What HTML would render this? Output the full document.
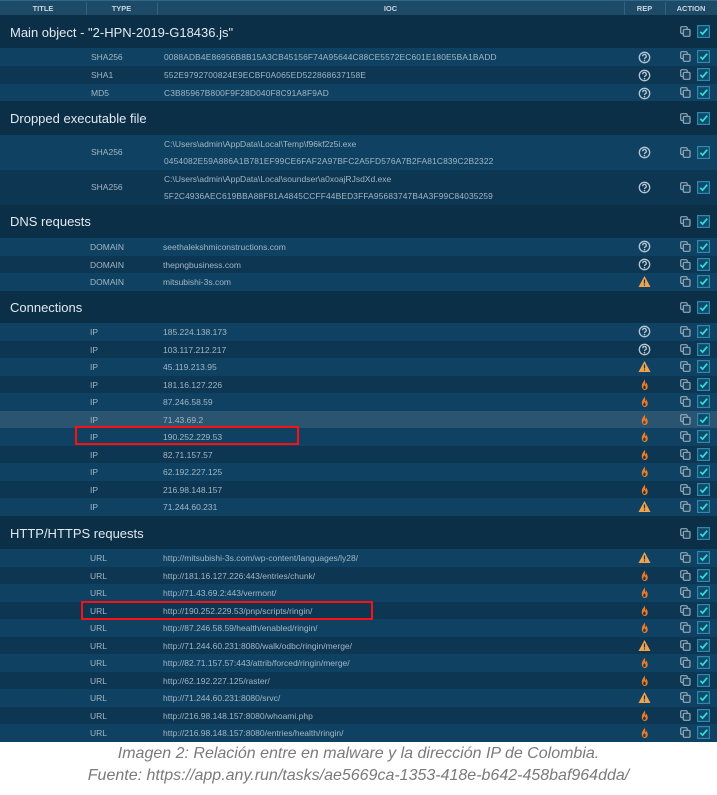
<!DOCTYPE html>
<html><head><meta charset="utf-8"><style>
*{margin:0;padding:0;box-sizing:border-box}
body{width:717px;height:795px;background:#fff;position:relative;overflow:hidden;font-family:"Liberation Sans",sans-serif}
.hd{position:absolute;left:0;top:0;width:717px;height:15px;background:#1c4a67;color:#c9d6df;font-size:7.5px;font-weight:bold;border-top:1px solid #2d6a8a}
.hd span{position:absolute;top:3px;text-align:center}
.hd i{position:absolute;top:1px;width:1px;height:13px;background:#2f6384}
.s{position:absolute;left:0;width:717px;background:#0c2f48;color:#e2e9ee;font-size:13px}
.s b{font-weight:normal;position:absolute;left:10px}
.r{position:absolute;left:0;width:717px;height:17.5px;color:#a4b6c3;font-size:8.5px;background:#0d3652}
.r.a{background:#0f4262}
.r.h{background:#2a5470}
.t{position:absolute;left:91px;top:4px}
.v{position:absolute;left:164px;top:4px;font-size:8.4px;letter-spacing:0.15px}
.r.ip .t{left:90px}.r.ip .v{left:163px;font-size:8.5px;letter-spacing:0}
.rep{position:absolute;left:638px;width:13px;height:13px}
.cp{position:absolute;left:680px;width:11px;height:11px}
.cb{position:absolute;left:697px;width:13px;height:13px}
.box{position:absolute;border:2px solid #ff1010}
.cap{position:absolute;left:0;width:717px;text-align:center;color:#7a7a7a;font-style:italic;font-size:16px;font-family:"Liberation Sans",sans-serif;font-weight:300}
</style></head><body>
<svg width="0" height="0" style="position:absolute">
<defs>
<symbol id="q" viewBox="0 0 13 13"><circle cx="6.5" cy="6.5" r="5.2" fill="none" stroke="#b8c6d0" stroke-width="1.3"/><path d="M4.7 5.2a1.8 1.8 0 1 1 2.6 1.6c-.6.3-.8.6-.8 1.2" fill="none" stroke="#b8c6d0" stroke-width="1.3"/><circle cx="6.5" cy="9.6" r=".8" fill="#b8c6d0"/></symbol>
<symbol id="w" viewBox="0 0 13 13"><path d="M6.5 1L12.5 12H.5z" fill="#f2a24a"/><rect x="5.9" y="4.5" width="1.2" height="4" fill="#0d3652"/><rect x="5.9" y="9.4" width="1.2" height="1.2" fill="#0d3652"/></symbol>
<symbol id="f" viewBox="0 0 13 13"><path d="M6 1C7 3 4 4.5 3.8 7.5 3.6 10.5 5.5 12 6.5 12c2 0 3.3-1.5 3.2-3.8C9.6 6.5 8.7 5.5 8.5 4.5 8 5.8 7.6 6.2 7.2 6.4 7.6 4.5 7 2.5 6 1z M6.5 11c-1 0-1.5-.8-1.3-1.8.2-.8 1-1.3 1.2-2.2.5.8 1.4 1.4 1.3 2.4 0 .9-.5 1.6-1.2 1.6z" fill="#f07a23" fill-rule="evenodd"/></symbol>
<symbol id="c" viewBox="0 0 11 11"><rect x="0.7" y="0.7" width="6.5" height="6.8" rx="1.2" fill="none" stroke="#95aab9" stroke-width="1.2"/><rect x="3.3" y="3.3" width="6.7" height="7" rx="1.2" fill="#1a4560" stroke="#95aab9" stroke-width="1.2"/></symbol>
<symbol id="k" viewBox="0 0 13 13"><rect x="0.6" y="0.6" width="11.8" height="11.8" fill="#0f4a6a" stroke="#2f88b0" stroke-width="1.2"/><path d="M3.3 6.8l2.3 2.3 4.6-5.4" fill="none" stroke="#2fe0d8" stroke-width="1.7"/></symbol>
</defs></svg>

<div class="hd"><span style="left:0;width:86px">TITLE</span><i style="left:86px"></i><span style="left:86px;width:71px">TYPE</span><i style="left:157px"></i><span style="left:157px;width:467px">IOC</span><i style="left:624px"></i><span style="left:624px;width:41px">REP</span><i style="left:665px"></i><span style="left:665px;width:52px">ACTION</span></div>

<div class="s" style="top:15px;height:33px"><b style="top:10px">Main object - "2-HPN-2019-G18436.js"</b><svg class="cp" style="top:11px"><use href="#c"/></svg><svg class="cb" style="top:10px"><use href="#k"/></svg></div>
<div class="r a" style="top:48px;height:18px"><span class="t">SHA256</span><span class="v">0088ADB4E86956B8B15A3CB45156F74A95644C88CE5572EC601E180E5BA1BADD</span><svg class="rep" style="top:3px"><use href="#q"/></svg><svg class="cp" style="top:3px"><use href="#c"/></svg><svg class="cb" style="top:2px"><use href="#k"/></svg></div>
<div class="r" style="top:66px;height:18px"><span class="t">SHA1</span><span class="v">552E9792700824E9ECBF0A065ED522868637158E</span><svg class="rep" style="top:3px"><use href="#q"/></svg><svg class="cp" style="top:3px"><use href="#c"/></svg><svg class="cb" style="top:2px"><use href="#k"/></svg></div>
<div class="r a" style="top:84px;height:17px"><span class="t">MD5</span><span class="v">C3B85967B800F9F28D040F8C91A8F9AD</span><svg class="rep" style="top:3px"><use href="#q"/></svg><svg class="cp" style="top:3px"><use href="#c"/></svg><svg class="cb" style="top:2px"><use href="#k"/></svg></div>

<div class="s" style="top:101px;height:34px"><b style="top:10px">Dropped executable file</b><svg class="cp" style="top:12px"><use href="#c"/></svg><svg class="cb" style="top:11px"><use href="#k"/></svg></div>
<div class="r a" style="top:135px;height:35px"><span class="t" style="top:12px">SHA256</span><span class="v" style="top:4px;font-size:8.5px;letter-spacing:0">C:\Users\admin\AppData\Local\Temp\f96kf2z5i.exe</span><span class="v" style="top:21px">0454082E59A886A1B781EF99CE6FAF2A97BFC2A5FD576A7B2FA81C839C2B2322</span><svg class="rep" style="top:11px"><use href="#q"/></svg><svg class="cp" style="top:12px"><use href="#c"/></svg><svg class="cb" style="top:11px"><use href="#k"/></svg></div>
<div class="r" style="top:170px;height:35px"><span class="t" style="top:12px">SHA256</span><span class="v" style="top:4px;font-size:8.5px;letter-spacing:0">C:\Users\admin\AppData\Local\soundser\a0xoajRJsdXd.exe</span><span class="v" style="top:21px">5F2C4936AEC619BBA88F81A4845CCFF44BED3FFA95683747B4A3F99C84035259</span><svg class="rep" style="top:11px"><use href="#q"/></svg><svg class="cp" style="top:12px"><use href="#c"/></svg><svg class="cb" style="top:11px"><use href="#k"/></svg></div>

<div class="s" style="top:205px;height:33px"><b style="top:9px">DNS requests</b><svg class="cp" style="top:11px"><use href="#c"/></svg><svg class="cb" style="top:10px"><use href="#k"/></svg></div>
<div class="r a ip" style="top:238px"><span class="t">DOMAIN</span><span class="v">seethalekshmiconstructions.com</span><svg class="rep" style="top:2px"><use href="#q"/></svg><svg class="cp" style="top:3px"><use href="#c"/></svg><svg class="cb" style="top:2px"><use href="#k"/></svg></div>
<div class="r ip" style="top:255.5px"><span class="t">DOMAIN</span><span class="v">thepngbusiness.com</span><svg class="rep" style="top:2px"><use href="#q"/></svg><svg class="cp" style="top:3px"><use href="#c"/></svg><svg class="cb" style="top:2px"><use href="#k"/></svg></div>
<div class="r a ip" style="top:273px"><span class="t">DOMAIN</span><span class="v">mitsubishi-3s.com</span><svg class="rep" style="top:2px"><use href="#w"/></svg><svg class="cp" style="top:3px"><use href="#c"/></svg><svg class="cb" style="top:2px"><use href="#k"/></svg></div>

<div class="s" style="top:290.5px;height:33px"><b style="top:9px">Connections</b><svg class="cp" style="top:11px"><use href="#c"/></svg><svg class="cb" style="top:10px"><use href="#k"/></svg></div>
<div class="r a ip" style="top:323px"><span class="t">IP</span><span class="v">185.224.138.173</span><svg class="rep" style="top:2px"><use href="#q"/></svg><svg class="cp" style="top:3px"><use href="#c"/></svg><svg class="cb" style="top:2px"><use href="#k"/></svg></div>
<div class="r ip" style="top:340.5px"><span class="t">IP</span><span class="v">103.117.212.217</span><svg class="rep" style="top:2px"><use href="#q"/></svg><svg class="cp" style="top:3px"><use href="#c"/></svg><svg class="cb" style="top:2px"><use href="#k"/></svg></div>
<div class="r a ip" style="top:358px"><span class="t">IP</span><span class="v">45.119.213.95</span><svg class="rep" style="top:2px"><use href="#w"/></svg><svg class="cp" style="top:3px"><use href="#c"/></svg><svg class="cb" style="top:2px"><use href="#k"/></svg></div>
<div class="r ip" style="top:375.5px"><span class="t">IP</span><span class="v">181.16.127.226</span><svg class="rep" style="top:2px"><use href="#f"/></svg><svg class="cp" style="top:3px"><use href="#c"/></svg><svg class="cb" style="top:2px"><use href="#k"/></svg></div>
<div class="r a ip" style="top:393px"><span class="t">IP</span><span class="v">87.246.58.59</span><svg class="rep" style="top:2px"><use href="#f"/></svg><svg class="cp" style="top:3px"><use href="#c"/></svg><svg class="cb" style="top:2px"><use href="#k"/></svg></div>
<div class="r h ip" style="top:410.5px"><span class="t">IP</span><span class="v">71.43.69.2</span><svg class="rep" style="top:2px"><use href="#f"/></svg><svg class="cp" style="top:3px"><use href="#c"/></svg><svg class="cb" style="top:2px"><use href="#k"/></svg></div>
<div class="r a ip" style="top:428px"><span class="t">IP</span><span class="v">190.252.229.53</span><svg class="rep" style="top:2px"><use href="#f"/></svg><svg class="cp" style="top:3px"><use href="#c"/></svg><svg class="cb" style="top:2px"><use href="#k"/></svg></div>
<div class="r ip" style="top:445.5px"><span class="t">IP</span><span class="v">82.71.157.57</span><svg class="rep" style="top:2px"><use href="#f"/></svg><svg class="cp" style="top:3px"><use href="#c"/></svg><svg class="cb" style="top:2px"><use href="#k"/></svg></div>
<div class="r a ip" style="top:463px"><span class="t">IP</span><span class="v">62.192.227.125</span><svg class="rep" style="top:2px"><use href="#f"/></svg><svg class="cp" style="top:3px"><use href="#c"/></svg><svg class="cb" style="top:2px"><use href="#k"/></svg></div>
<div class="r ip" style="top:480.5px"><span class="t">IP</span><span class="v">216.98.148.157</span><svg class="rep" style="top:2px"><use href="#f"/></svg><svg class="cp" style="top:3px"><use href="#c"/></svg><svg class="cb" style="top:2px"><use href="#k"/></svg></div>
<div class="r a ip" style="top:498px"><span class="t">IP</span><span class="v">71.244.60.231</span><svg class="rep" style="top:2px"><use href="#w"/></svg><svg class="cp" style="top:3px"><use href="#c"/></svg><svg class="cb" style="top:2px"><use href="#k"/></svg></div>

<div class="s" style="top:515.5px;height:33.5px"><b style="top:10px">HTTP/HTTPS requests</b><svg class="cp" style="top:12px"><use href="#c"/></svg><svg class="cb" style="top:11px"><use href="#k"/></svg></div>
<div class="r a ip" style="top:549px"><span class="t">URL</span><span class="v">http://mitsubishi-3s.com/wp-content/languages/ly28/</span><svg class="rep" style="top:2px"><use href="#w"/></svg><svg class="cp" style="top:3px"><use href="#c"/></svg><svg class="cb" style="top:2px"><use href="#k"/></svg></div>
<div class="r ip" style="top:566.5px"><span class="t">URL</span><span class="v">http://181.16.127.226:443/entries/chunk/</span><svg class="rep" style="top:2px"><use href="#f"/></svg><svg class="cp" style="top:3px"><use href="#c"/></svg><svg class="cb" style="top:2px"><use href="#k"/></svg></div>
<div class="r a ip" style="top:584px"><span class="t">URL</span><span class="v">http://71.43.69.2:443/vermont/</span><svg class="rep" style="top:2px"><use href="#f"/></svg><svg class="cp" style="top:3px"><use href="#c"/></svg><svg class="cb" style="top:2px"><use href="#k"/></svg></div>
<div class="r ip" style="top:601.5px"><span class="t">URL</span><span class="v">http://190.252.229.53/pnp/scripts/ringin/</span><svg class="rep" style="top:2px"><use href="#f"/></svg><svg class="cp" style="top:3px"><use href="#c"/></svg><svg class="cb" style="top:2px"><use href="#k"/></svg></div>
<div class="r a ip" style="top:619px"><span class="t">URL</span><span class="v">http://87.246.58.59/health/enabled/ringin/</span><svg class="rep" style="top:2px"><use href="#f"/></svg><svg class="cp" style="top:3px"><use href="#c"/></svg><svg class="cb" style="top:2px"><use href="#k"/></svg></div>
<div class="r ip" style="top:636.5px"><span class="t">URL</span><span class="v">http://71.244.60.231:8080/walk/odbc/ringin/merge/</span><svg class="rep" style="top:2px"><use href="#w"/></svg><svg class="cp" style="top:3px"><use href="#c"/></svg><svg class="cb" style="top:2px"><use href="#k"/></svg></div>
<div class="r a ip" style="top:654px"><span class="t">URL</span><span class="v">http://82.71.157.57:443/attrib/forced/ringin/merge/</span><svg class="rep" style="top:2px"><use href="#f"/></svg><svg class="cp" style="top:3px"><use href="#c"/></svg><svg class="cb" style="top:2px"><use href="#k"/></svg></div>
<div class="r ip" style="top:671.5px"><span class="t">URL</span><span class="v">http://62.192.227.125/raster/</span><svg class="rep" style="top:2px"><use href="#f"/></svg><svg class="cp" style="top:3px"><use href="#c"/></svg><svg class="cb" style="top:2px"><use href="#k"/></svg></div>
<div class="r a ip" style="top:689px"><span class="t">URL</span><span class="v">http://71.244.60.231:8080/srvc/</span><svg class="rep" style="top:2px"><use href="#w"/></svg><svg class="cp" style="top:3px"><use href="#c"/></svg><svg class="cb" style="top:2px"><use href="#k"/></svg></div>
<div class="r ip" style="top:706.5px"><span class="t">URL</span><span class="v">http://216.98.148.157:8080/whoami.php</span><svg class="rep" style="top:2px"><use href="#f"/></svg><svg class="cp" style="top:3px"><use href="#c"/></svg><svg class="cb" style="top:2px"><use href="#k"/></svg></div>
<div class="r a ip" style="top:724px"><span class="t">URL</span><span class="v">http://216.98.148.157:8080/entries/health/ringin/</span><svg class="rep" style="top:2px"><use href="#f"/></svg><svg class="cp" style="top:3px"><use href="#c"/></svg><svg class="cb" style="top:2px"><use href="#k"/></svg></div>

<div class="box" style="left:75px;top:426px;width:224px;height:19px"></div>
<div class="box" style="left:81px;top:601px;width:292px;height:19px"></div>

<div class="cap" style="top:745px">Imagen 2: Relación entre en malware y la dirección IP de Colombia.</div>
<div class="cap" style="top:767px">Fuente: https://app.any.run/tasks/ae5669ca-1353-418e-b642-458baf964dda/</div>
</body></html>
